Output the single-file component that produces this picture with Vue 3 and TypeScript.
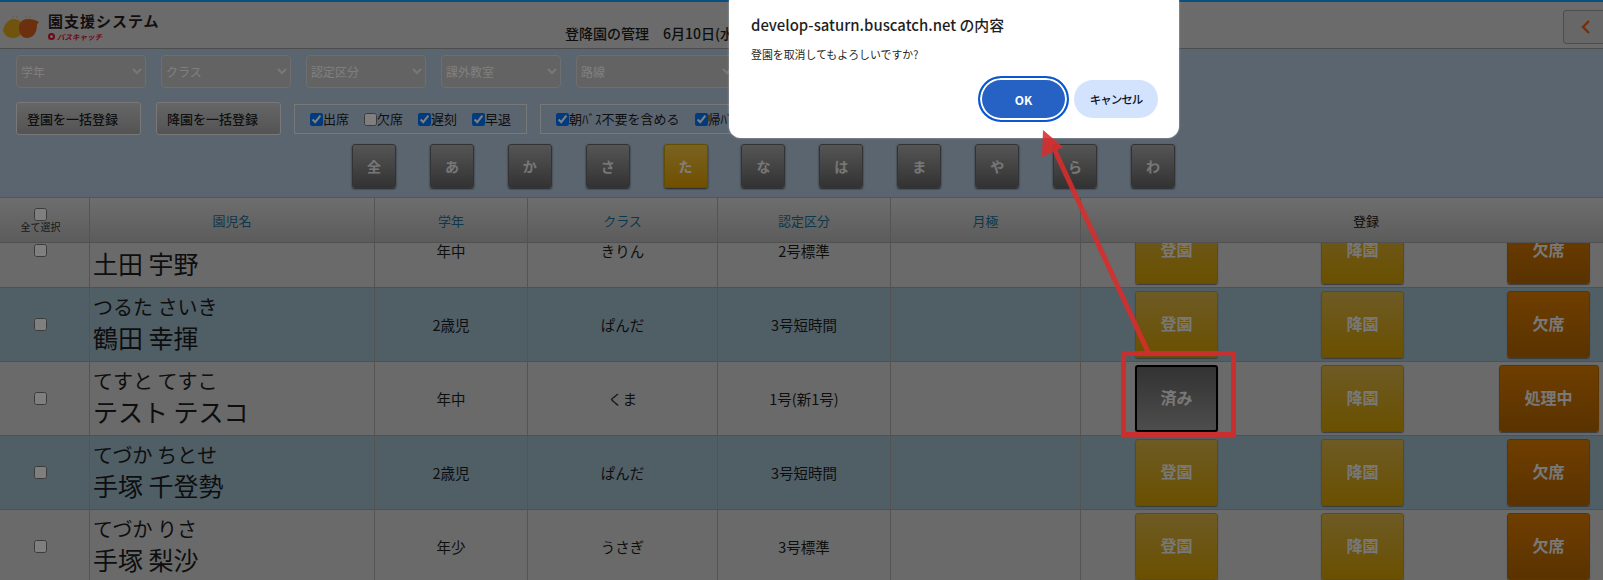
<template>
  <div class="page">
    <header class="top">
      <div class="brand">
        <svg class="logo" width="38" height="24" viewBox="0 0 38 24">
          <circle cx="11" cy="2" r="1" fill="#e8c070" />
          <circle cx="15" cy="2" r="1" fill="#e8c070" />
          <circle cx="24" cy="2" r="1" fill="#e8c070" />
          <circle cx="28" cy="2" r="1" fill="#e8c070" />
          <path d="M1 15C3 8 7 4 12 4c5 0 9 4 9 9s-4 10-10 10C6 23 2 20 1 15z" fill="#e0a81c" />
          <path d="M17 13c0-6 4-9 9-9 4 0 8 1 11 3-1 1-2 2-2 3 0 8-4 13-10 13-5 0-8-4-8-10z" fill="#d8601c" />
        </svg>
        <div class="brand-text">
          <div class="brand-name">園支援システム</div>
          <div class="brand-sub"><span class="brand-dot"></span>バスキャッチ</div>
        </div>
      </div>
      <div class="page-title">登降園の管理　6月10日(水)</div>
      <button class="back">
        <svg width="10" height="14" viewBox="0 0 10 14"><path d="M8 1 2 7l6 6" fill="none" stroke="#f05c14" stroke-width="2.4" /></svg>
      </button>
    </header>

    <section class="filters">
      <div class="select-row">
        <div v-for="s in selects" :key="s.label" class="select-wrap" :style="{ width: s.width + 'px' }">
          <select>
            <option>{{ s.label }}</option>
          </select>
          <svg class="caret" width="10" height="7" viewBox="0 0 10 7"><path d="M1 1l4 4 4-4" fill="none" stroke="#f0f0f0" stroke-width="2" /></svg>
        </div>
      </div>

      <div class="action-row">
        <button class="bulk">登園を一括登録</button>
        <button class="bulk">降園を一括登録</button>
        <div class="check-group">
          <label v-for="c in statusChecks" :key="c.label" class="check">
            <input type="checkbox" :checked="c.on" />{{ c.label }}
          </label>
        </div>
        <div class="check-group second">
          <label class="check"><input type="checkbox" checked />朝ﾊﾞｽ不要を含める</label>
          <label class="check"><input type="checkbox" checked />帰ﾊﾞｽ不要を含める</label>
        </div>
      </div>

      <div class="kana-row">
        <button v-for="k in kana" :key="k" class="kana" :class="{ active: k === 'た' }">{{ k }}</button>
      </div>
    </section>

    <div class="table">
      <div class="row head">
        <div class="cell select-all">
          <input type="checkbox" />
          <span>全て選択</span>
        </div>
        <div class="cell">園児名</div>
        <div class="cell">学年</div>
        <div class="cell">クラス</div>
        <div class="cell">認定区分</div>
        <div class="cell">月極</div>
        <div class="cell register-head">登録</div>
      </div>
      <div class="body">
        <div class="rows">
          <div v-for="(r, i) in rows" :key="r.name" class="row" :class="{ tinted: i % 2 === 1 }">
            <div class="cell pick"><input type="checkbox" /></div>
            <div class="cell name">
              <span class="kana-name">{{ r.kana }}</span>
              <span class="kanji-name">{{ r.name }}</span>
            </div>
            <div class="cell">{{ r.grade }}</div>
            <div class="cell">{{ r.cls }}</div>
            <div class="cell">{{ r.cert }}</div>
            <div class="cell"></div>
            <div class="cell register">
              <div class="slot"><button class="act yellow" :class="{ done: r.arrived }">{{ r.arrived ? '済み' : '登園' }}</button></div>
              <div class="slot"><button class="act yellow">降園</button></div>
              <div class="slot last"><button class="act orange" :class="{ wide: r.arrived }">{{ r.arrived ? '処理中' : '欠席' }}</button></div>
            </div>
          </div>
        </div>
      </div>
    </div>

    <div class="dim"></div>

    <div class="dialog">
      <div class="dialog-title">develop-saturn.buscatch.net の内容</div>
      <div class="dialog-msg">登園を取消してもよろしいですか?</div>
      <div class="dialog-actions">
        <button class="ok">OK</button>
        <button class="cancel">キャンセル</button>
      </div>
    </div>

    <!-- annotation drawn on top of the screenshot -->
    <svg class="note" width="1603" height="580" viewBox="0 0 1603 580">
      <rect x="1123.5" y="353.5" width="110" height="81" fill="none" stroke="#c92f2f" stroke-width="5" />
      <g opacity="0.88">
        <path d="M1148 352 1051 142" fill="none" stroke="#da2c2c" stroke-width="5" />
        <path d="M1043 130 1042 157 1063 147z" fill="#da2c2c" />
      </g>
    </svg>
  </div>
</template>

<script setup lang="ts">
interface Row {
  kana: string
  name: string
  grade: string
  cls: string
  cert: string
  arrived?: boolean
}

const selects = [
  { label: '学年', width: 130 },
  { label: 'クラス', width: 130 },
  { label: '認定区分', width: 120 },
  { label: '課外教室', width: 120 },
  { label: '路線', width: 160 }
]

const statusChecks = [
  { label: '出席', on: true },
  { label: '欠席', on: false },
  { label: '遅刻', on: true },
  { label: '早退', on: true }
]

const kana = ['全', 'あ', 'か', 'さ', 'た', 'な', 'は', 'ま', 'や', 'ら', 'わ']

const rows: Row[] = [
  { kana: 'つちだ うの', name: '土田 宇野', grade: '年中', cls: 'きりん', cert: '2号標準' },
  { kana: 'つるた さいき', name: '鶴田 幸揮', grade: '2歳児', cls: 'ぱんだ', cert: '3号短時間' },
  { kana: 'てすと てすこ', name: 'テスト テスコ', grade: '年中', cls: 'くま', cert: '1号(新1号)', arrived: true },
  { kana: 'てづか ちとせ', name: '手塚 千登勢', grade: '2歳児', cls: 'ぱんだ', cert: '3号短時間' },
  { kana: 'てづか りさ', name: '手塚 梨沙', grade: '年少', cls: 'うさぎ', cert: '3号標準' }
]
</script>

<style>
html,
body {
  margin: 0;
  overflow: hidden;
}
</style>

<style scoped>
.page {
  position: relative;
  width: 1603px;
  height: 580px;
  overflow: hidden;
  background: #d4d4d4;
  color: #1c1c1c;
  font-family: "Noto Sans CJK JP", "Liberation Sans", sans-serif;
}

button {
  font-family: inherit;
  padding: 0;
}

.top {
  display: flex;
  align-items: center;
  height: 46px;
  border-top: 2px solid #149fff;
  border-bottom: 1px solid #9a9a9a;
  background: #d6d6d6;
  box-sizing: content-box;
}

.brand {
  display: flex;
  align-items: center;
  width: 565px;
  padding-left: 2px;
  box-sizing: border-box;
}

.logo {
  margin-top: 3px;
}

.brand-text {
  margin-left: 8px;
  margin-top: 3px;
}

.brand-name {
  font-size: 15px;
  font-weight: 700;
  letter-spacing: 1px;
  line-height: 20px;
  color: #2a1c1c;
}

.brand-sub {
  display: flex;
  align-items: center;
  gap: 2px;
  font-size: 7.5px;
  font-weight: 700;
  font-style: italic;
  line-height: 12px;
  color: #e01030;
}

.brand-dot {
  width: 7px;
  height: 7px;
  border-radius: 50%;
  border: 2px solid #e01030;
  box-sizing: border-box;
}

.page-title {
  flex: 1;
  margin-top: 15px;
  font-size: 14px;
  font-weight: 500;
  line-height: 20px;
}

.back {
  display: flex;
  align-items: center;
  justify-content: center;
  width: 46px;
  height: 34px;
  margin-top: 3px;
  margin-right: -6px;
  border: 1px solid #9a9a9a;
  border-radius: 3px;
  background: #cfcfcf;
}

.filters {
  height: 148px;
  padding: 6px 0 0 16px;
  background: #b6cae0;
  box-sizing: border-box;
}

.select-row {
  display: flex;
  gap: 15px;
}

.select-wrap {
  position: relative;
  height: 33px;
}

.select-wrap select {
  width: 100%;
  height: 100%;
  padding: 0 4px;
  border: 1px solid #dcdcdc;
  border-radius: 4px;
  background: #c6c6c6;
  color: #fff;
  font-family: inherit;
  font-size: 12px;
  appearance: none;
}

.caret {
  position: absolute;
  right: 4px;
  top: 13px;
  pointer-events: none;
}

.action-row {
  display: flex;
  align-items: center;
  margin-top: 14px;
  height: 33px;
}

.bulk {
  width: 125px;
  height: 33px;
  margin-right: 15px;
  padding-left: 10px;
  border: 1px solid #f0f0f0;
  border-radius: 3px;
  background: linear-gradient(#cccccc, #a8a8a8);
  color: #222;
  font-size: 13px;
  font-weight: 500;
  text-align: left;
}

.check-group {
  display: flex;
  align-items: center;
  gap: 15px;
  width: 233px;
  height: 30px;
  margin-left: -2px;
  padding-left: 15px;
  border: 1px solid #f0f0f0;
  box-sizing: border-box;
}

.check-group.second {
  width: 300px;
  margin-left: 13px;
}

.check {
  display: flex;
  align-items: center;
  font-size: 13px;
  line-height: 16px;
  white-space: nowrap;
}

.check input {
  width: 13px;
  height: 13px;
  margin: 2px 0 0;
}

.kana-row {
  display: flex;
  gap: 33.9px;
  margin-top: 9px;
  padding-left: 336px;
}

.kana {
  width: 44px;
  height: 44px;
  border: 1px solid #666;
  border-radius: 3px;
  background: linear-gradient(#aaaaaa, #666666);
  box-shadow: 0 1px 2px #444;
  color: #eee;
  font-size: 14px;
  font-weight: 700;
}

.kana.active {
  border-color: #c79a00;
  background: linear-gradient(#f4c542, #e0a000);
  color: #fff;
}

.table {
  height: 383px;
  display: flex;
  flex-direction: column;
}

.row {
  display: grid;
  grid-template-columns: 90px 285px 153px 190px 173px 190px 522px;
  height: 74px;
  border-bottom: 1px solid #a2a2a2;
  box-sizing: border-box;
  background: #d4d4d4;
}

.row.tinted {
  background: #a0bccc;
}

.row.head {
  flex: none;
  height: 46px;
  border-top: 1px solid #aaa;
  background: linear-gradient(#dcdcdc, #b8b8b8);
  color: #1a6f96;
  font-size: 13px;
}

.body {
  flex: 1;
  overflow: hidden;
}

.rows {
  margin-top: -29px;
}

.cell {
  display: flex;
  align-items: center;
  justify-content: center;
  border-right: 1px solid #a8a8a8;
  font-size: 14.5px;
}

.head .cell {
  font-size: 13px;
}

.cell:last-child {
  border-right: 0;
}

.cell input {
  width: 13px;
  height: 13px;
  margin: 0;
}

.cell.pick,
.cell.select-all {
  padding-right: 8px;
}

.select-all {
  flex-direction: column;
}

.head .select-all span {
  font-size: 10px;
  line-height: 12px;
  color: #333;
}

.head .register-head {
  color: #111;
  padding-left: 48px;
}

.cell.name {
  flex-direction: column;
  align-items: flex-start;
  padding-left: 3px;
  padding-bottom: 5px;
}

.kana-name {
  font-size: 20px;
  line-height: 30px;
}

.kanji-name {
  font-size: 25px;
  line-height: 32px;
  margin-top: -1px;
}

.cell.register {
  display: grid;
  grid-template-columns: 186px 186px 147px;
  padding-left: 2px;
  align-items: center;
  justify-items: center;
}

.slot {
  display: flex;
  justify-content: center;
  width: 100%;
}

.slot.last {
  padding-left: 39px;
  box-sizing: border-box;
}

.act {
  width: 83px;
  height: 67px;
  margin-bottom: 1px;
  padding-bottom: 2px;
  border: 1px solid #b89a30;
  border-radius: 3px;
  box-shadow: 0 1px 1px #777;
  color: #f0f0f0;
  font-size: 16px;
  font-weight: 700;
}

.yellow {
  background: linear-gradient(#dcb64a, #d4a000);
}

.orange {
  border-color: #b86a00;
  background: linear-gradient(#de7c00, #b46600);
}

.wide {
  width: 100px;
}

.act.done {
  border: 2px solid #000;
  background: linear-gradient(#666, #9a9a9a);
}

.dim {
  position: absolute;
  inset: 0;
  background: rgba(0, 0, 0, 0.5);
}

.dialog {
  position: absolute;
  left: 729px;
  top: 0;
  width: 450px;
  height: 138px;
  padding: 14px 21px 0 22px;
  box-sizing: border-box;
  border-radius: 0 0 12px 12px;
  background: #fff;
  box-shadow: 0 0 2px rgba(255, 255, 255, 0.6);
}

.dialog-title {
  font-size: 14.9px;
  font-weight: 500;
  line-height: 22px;
  color: #1f1f1f;
}

.dialog-msg {
  margin-top: 9px;
  font-size: 10.9px;
  line-height: 18px;
  color: #1f1f1f;
}

.dialog-actions {
  display: flex;
  justify-content: flex-end;
  align-items: center;
  gap: 5px;
  margin-top: 13px;
}

.ok {
  width: 91px;
  height: 46px;
  border: 2px solid #0b57d0;
  border-radius: 23px;
  background: #2562c4;
  box-shadow: inset 0 0 0 2px #fff;
  color: #fff;
  font-size: 12px;
  font-weight: 700;
}

.cancel {
  width: 84px;
  height: 38px;
  border: 0;
  border-radius: 19px;
  background: #d3e3fd;
  color: #0a1428;
  font-size: 11.5px;
  font-weight: 500;
  letter-spacing: -1px;
}

.note {
  position: absolute;
  left: 0;
  top: 0;
  pointer-events: none;
}
</style>
